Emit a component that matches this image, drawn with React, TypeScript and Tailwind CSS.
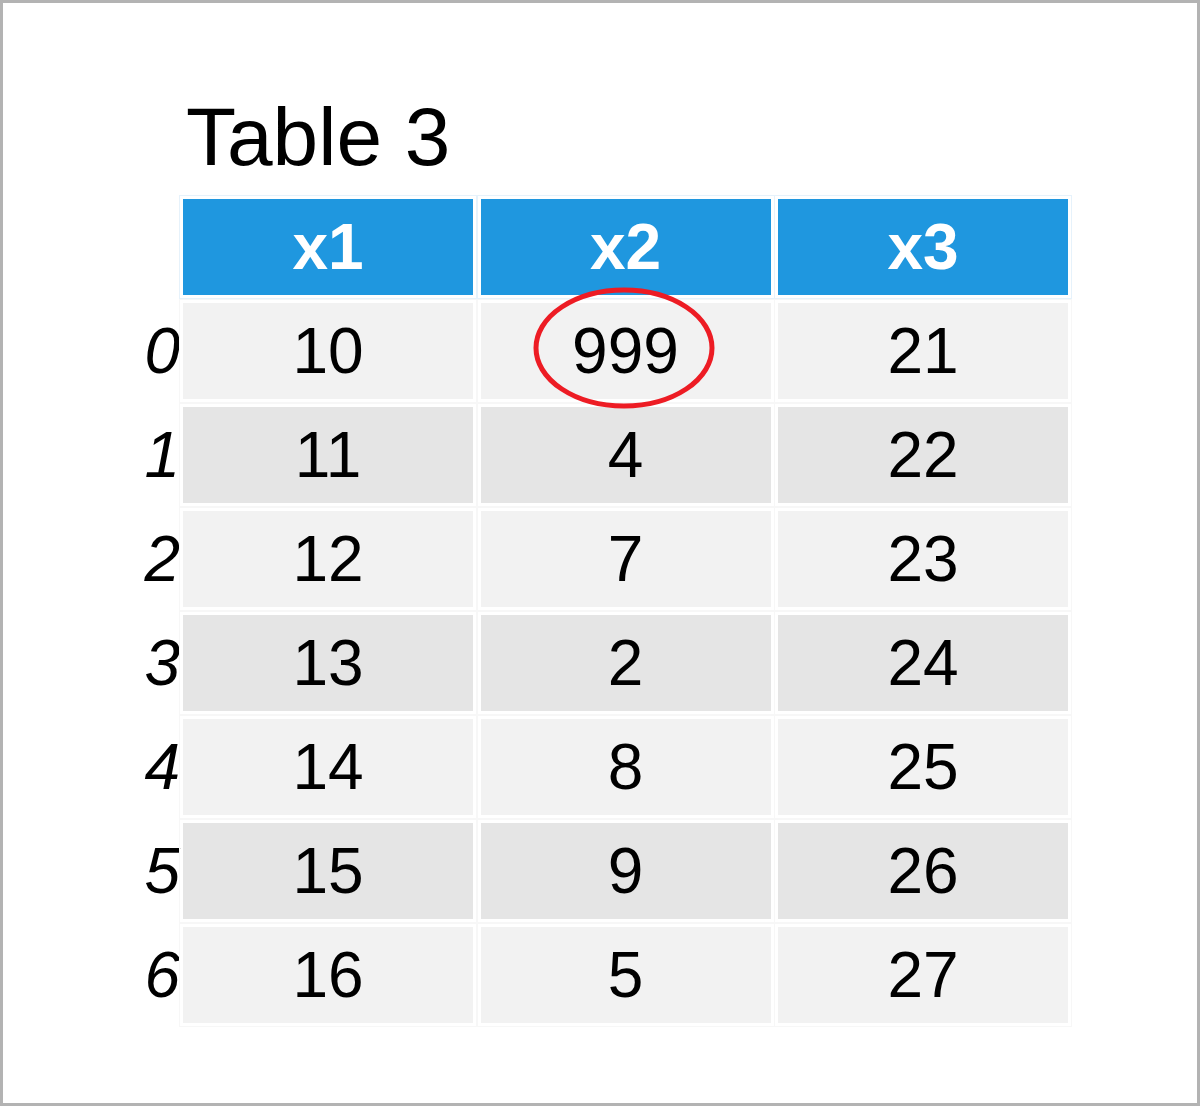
const rows = [
  [10, 999, 21],
  [11, 4, 22],
  [12, 7, 23],
  [13, 2, 24],
  [14, 8, 25],
  [15, 9, 26],
  [16, 5, 27],
]

export default function App() {
  return (
    <div
      className="relative w-[1200px] h-[1106px] border-[3px] border-[#b3b3b3] bg-white text-black"
      style={{ fontFamily: '"Liberation Sans", Arial, sans-serif' }}
    >
      <div className="pl-[130px] pt-[88px]">
        <h1 className="ml-[53px] text-[82px] leading-[92px] font-normal">Table 3</h1>

        {/* table */}
        <div className="mt-[16px] flex flex-col gap-[8px]">
          <div className="flex">
            <div className="w-[47px] mr-[3px]" />
            <div className="flex gap-[7.5px]">
              {['x1', 'x2', 'x3'].map((h) => (
                <div
                  key={h}
                  className="w-[290px] h-[96px] flex items-center justify-center bg-[#1f97df] text-white font-bold text-[64px] leading-none outline outline-1 outline-offset-[3px] outline-[#e6f2fb]"
                >
                  {h}
                </div>
              ))}
            </div>
          </div>

          {rows.map((r, i) => (
            <div key={i} className="flex">
              <div className="w-[47px] mr-[3px] flex items-center justify-end italic text-[64px] leading-none">
                {i}
              </div>
              <div className="flex gap-[7.5px]">
                {r.map((v, j) => (
                  <div
                    key={j}
                    className={`w-[290px] h-[96px] flex items-center justify-center text-[64px] leading-none outline outline-1 outline-offset-[3px] outline-[#f7f7f7] ${
                      i % 2 === 0 ? 'bg-[#f2f2f2]' : 'bg-[#e5e5e5]'
                    }`}
                  >
                    {v}
                  </div>
                ))}
              </div>
            </div>
          ))}
        </div>
      </div>

      {/* red highlight ring around 999 */}
      <svg
        className="absolute left-[528px] top-[281px]"
        width="186"
        height="128"
        viewBox="0 0 186 128"
      >
        <ellipse cx="93" cy="64" rx="88" ry="58" fill="none" stroke="#ed1c24" strokeWidth="5" />
      </svg>
    </div>
  )
}
